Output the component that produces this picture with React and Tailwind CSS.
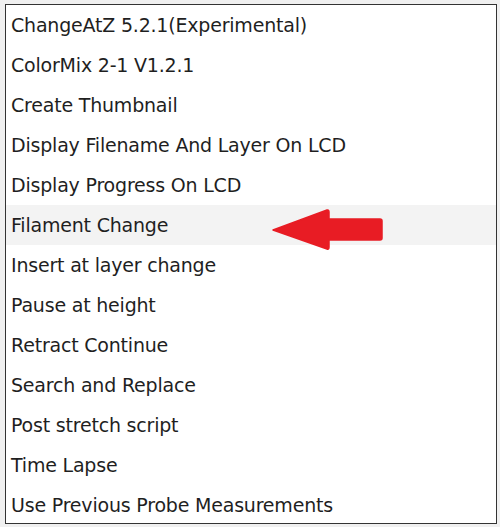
import React from "react";

const items = [
  "ChangeAtZ 5.2.1(Experimental)",
  "ColorMix 2-1 V1.2.1",
  "Create Thumbnail",
  "Display Filename And Layer On LCD",
  "Display Progress On LCD",
  "Filament Change",
  "Insert at layer change",
  "Pause at height",
  "Retract Continue",
  "Search and Replace",
  "Post stretch script",
  "Time Lapse",
  "Use Previous Probe Measurements",
];

export default function App() {
  return (
    <div className="w-[500px] h-[527px] bg-[#f0f0f0] pt-[4px] pl-[5px] pr-[4px] pb-[4px]">
      <div className="relative h-[520px] w-[492px] border border-[#333333] bg-white overflow-hidden">
        <ul className="flex flex-col">
          {items.map((t, i) => (
            <li
              key={t}
              className={`h-[40px] flex items-center pl-[5px] text-[19px] tracking-[-0.2px] text-[#1f1f1f] ${i === 5 ? "bg-[#f3f3f3]" : ""}`}
              style={{ fontFamily: '"DejaVu Sans", sans-serif' }}
            >
              {t}
            </li>
          ))}
        </ul>
        <svg
          className="absolute left-[261px] top-[200px]"
          width="120"
          height="48"
          viewBox="0 0 120 48"
        >
          <path
            d="M6 25 L60 5 Q62 4.5 62 7 L62 14 L113 14 Q115 14 115 16 L115 33 Q115 35 113 35 L62 35 L62 42 Q62 45 60 44 Z"
            fill="#e81c24"
            stroke="#e81c24"
            strokeLinejoin="round"
            strokeWidth="1.5"
          />
        </svg>
      </div>
    </div>
  );
}
